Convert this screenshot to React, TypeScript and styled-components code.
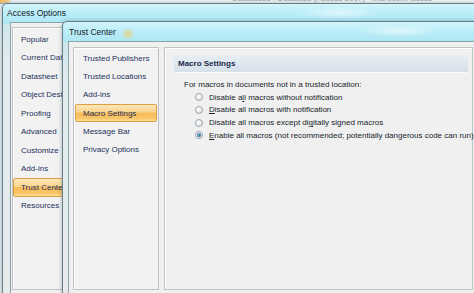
import React from 'react';
import styled, {createGlobalStyle} from 'styled-components';

const GlobalStyle = createGlobalStyle`
  html, body {
    margin: 0;
    padding: 0;
    background: #e4ebee;
  }
  body {
    font-family: "Liberation Sans", Arial, sans-serif;
    font-size: 8px;
  }
`

const Desktop = styled.div`
  position: relative;
  width: 474px;
  height: 293px;
  overflow: hidden;
  background: #e4ebee;
`

// the main Access window, only its lower title edge peeks out
const AppStrip = styled.div`
  height: 3px;
  overflow: hidden;
  background: linear-gradient(90deg, #f2b760 0, #f6d49a 9px, #eef3f5 11px, #f3f6f7);
  border-bottom: 1px solid #9fb1b7;

  span {
    display: block;
    margin: -5px 0 0 232px;
    color: #9aa3a8;
    font-size: 8px;
    line-height: 8px;
    white-space: nowrap;
  }
`

const Window = styled.div<{$left: number; $top: number}>`
  position: absolute;
  left: ${p => p.$left}px;
  top: ${p => p.$top}px;
  width: 560px;
  height: 340px;
  display: flex;
  flex-direction: column;
  border: 1px solid #647f87;
  border-radius: 5px 5px 0 0;
  background:
    radial-gradient(ellipse 40px 6px at 60% 9px, rgba(255, 255, 255, 0.55), transparent),
    linear-gradient(180deg, #d3f4fa 0, #bdeef8 8px, #aee7f4 19px, #cfe6ec 21px, #e3ecee 60px, #e6eaeb 100%);
  box-shadow: 0 0 4px rgba(40, 70, 80, 0.35);
`

const TitleBar = styled.div<{$height: number; $indent: number}>`
  height: ${p => p.$height}px;
  flex: none;
  display: flex;
  align-items: center;
  padding-left: ${p => p.$indent}px;
  color: #14212b;
  font-size: 8.5px;
`

const Glow = styled.div`
  position: absolute;
  left: 58px;
  top: 6px;
  width: 14px;
  height: 12px;
  border-radius: 50%;
  background: radial-gradient(circle, rgba(250, 200, 90, 0.7), rgba(250, 220, 140, 0) 70%);
`

const WindowBody = styled.div<{$frame: number; $padTop: number; $padLeft: number}>`
  flex: 1;
  display: flex;
  align-items: flex-start;
  gap: 5px;
  margin-left: ${p => p.$frame}px;
  padding: ${p => p.$padTop}px 0 0 ${p => p.$padLeft}px;
  background: #f0f0f0;
  border: 1px solid #8da3aa;
  border-right: none;
  border-bottom: none;
`

const NavPanel = styled.div<{$width: number; $height: number; $padTop: number}>`
  width: ${p => p.$width}px;
  height: ${p => p.$height}px;
  flex: none;
  box-sizing: border-box;
  padding-top: ${p => p.$padTop}px;
  background: #f2f2f2;
  border: 1px solid #bfc3c6;
  box-shadow: inset 1px 1px 0 #ffffff;
`

const NavItem = styled.div<{$active?: boolean; $row: number; $inset: number}>`
  height: ${p => p.$row}px;
  display: flex;
  align-items: center;
  box-sizing: border-box;
  margin: 0 1px 0 ${p => p.$inset}px;
  padding-left: 7px;
  white-space: nowrap;
  color: #22315a;
  border: 1px solid ${p => (p.$active ? '#dc9e43' : 'transparent')};
  border-radius: 2px;
  background: ${p =>
    p.$active
      ? 'linear-gradient(180deg, #fde7b8 0, #fbd58e 45%, #f8bb55 50%, #f9c66a 85%, #fde39c 100%)'
      : 'transparent'};
`

const ContentPanel = styled.div`
  width: 309px;
  height: 243px;
  flex: none;
  box-sizing: border-box;
  padding: 7px 4px 0 9px;
  background: #f0f0f0;
  border: 1px solid #bfc3c6;
  box-shadow: inset 1px 1px 0 #ffffff;
  color: #161d29;
`

const SectionHeader = styled.div`
  height: 17px;
  display: flex;
  align-items: center;
  padding-left: 4px;
  font-weight: bold;
  color: #1a2a4a;
  background: linear-gradient(180deg, #e8eef4 0, #d6e0ea 100%);
  border-bottom: 1px solid #f8fafc;
`

const Intro = styled.div`
  height: 12px;
  line-height: 12px;
  margin: 6px 0 0 10px;
`

const RadioList = styled.div`
  padding-left: 21px;
`

const RadioRow = styled.label`
  height: 12.67px;
  display: flex;
  align-items: center;
  gap: 6px;
  white-space: nowrap;
`

const RadioDot = styled.span<{$checked?: boolean}>`
  position: relative;
  width: 8px;
  height: 8px;
  flex: none;
  box-sizing: border-box;
  border-radius: 50%;
  border: 1px solid #9aa3ab;
  background: radial-gradient(circle at 35% 35%, #ffffff, #d8dde2);

  &::after {
    content: '';
    display: ${p => (p.$checked ? 'block' : 'none')};
    position: absolute;
    left: 1px;
    top: 1px;
    width: 4px;
    height: 4px;
    border-radius: 50%;
    background: radial-gradient(circle at 35% 35%, #6fb0c8, #1f4f66);
  }
`

const accessNav = [
    'Popular', 'Current Database', 'Datasheet', 'Object Designers', 'Proofing', 'Advanced',
    'Customize', 'Add-ins', 'Trust Center', 'Resources',
]

const trustNav = [
    'Trusted Publishers', 'Trusted Locations', 'Add-ins', 'Macro Settings', 'Message Bar', 'Privacy Options',
]

const App: React.FC = () => {
    return (
        <Desktop>
            <GlobalStyle/>
            <AppStrip><span>Database1 : Database (Access 2007) - Microsoft Access</span></AppStrip>

            <Window $left={2} $top={3}>
                <TitleBar $height={18} $indent={4}>Access Options</TitleBar>
                <WindowBody $frame={7} $padTop={4} $padLeft={1}>
                    <NavPanel $width={70} $height={263} $padTop={2}>
                        {accessNav.map(item => (
                            <NavItem key={item} $row={18.5} $inset={0} $active={item === 'Trust Center'}>
                                {item}
                            </NavItem>
                        ))}
                    </NavPanel>
                </WindowBody>
            </Window>

            <Window $left={62} $top={21}>
                <Glow/>
                <TitleBar $height={19} $indent={6}>Trust Center</TitleBar>
                <WindowBody $frame={5} $padTop={5} $padLeft={4}>
                    <NavPanel $width={86} $height={243} $padTop={1}>
                        {trustNav.map(item => (
                            <NavItem key={item} $row={18.3} $inset={1} $active={item === 'Macro Settings'}>
                                {item}
                            </NavItem>
                        ))}
                    </NavPanel>
                    <ContentPanel>
                        <SectionHeader>Macro Settings</SectionHeader>
                        <Intro>For macros in documents not in a trusted location:</Intro>
                        <RadioList>
                            <RadioRow><RadioDot/><span>Disable a<u>l</u>l macros without notification</span></RadioRow>
                            <RadioRow><RadioDot/><span><u>D</u>isable all macros with notification</span></RadioRow>
                            <RadioRow><RadioDot/><span>Disable all macros except di<u>g</u>itally signed macros</span></RadioRow>
                            <RadioRow><RadioDot $checked/><span><u>E</u>nable all macros (not recommended; potentially dangerous code can run)</span></RadioRow>
                        </RadioList>
                    </ContentPanel>
                </WindowBody>
            </Window>
        </Desktop>
    )
}

export default App
